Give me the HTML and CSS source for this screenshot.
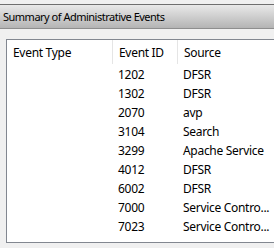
FILE: index.html
```html
<!DOCTYPE html>
<html lang="en">
<head>
  <meta charset="UTF-8" />
  <title>Summary of Administrative Events</title>
  <link rel="stylesheet" href="styles.css">
</head>
<body>

<!-- SECTION HEADER -->
<div class="section-bar">
  <span>Summary of Administrative Events</span>
</div>

<!-- EVENT LIST -->
<div class="event-list">
  <div class="list-head">
    <div class="col col-type">Event Type</div>
    <div class="col col-id">Event ID</div>
    <div class="col col-source">Source</div>
  </div>
  <div class="list-body">
    <div class="row"><div class="col col-type"></div><div class="col col-id">1202</div><div class="col col-source">DFSR</div></div>
    <div class="row"><div class="col col-type"></div><div class="col col-id">1302</div><div class="col col-source">DFSR</div></div>
    <div class="row"><div class="col col-type"></div><div class="col col-id">2070</div><div class="col col-source">avp</div></div>
    <div class="row"><div class="col col-type"></div><div class="col col-id">3104</div><div class="col col-source">Search</div></div>
    <div class="row"><div class="col col-type"></div><div class="col col-id">3299</div><div class="col col-source">Apache Service</div></div>
    <div class="row"><div class="col col-type"></div><div class="col col-id">4012</div><div class="col col-source">DFSR</div></div>
    <div class="row"><div class="col col-type"></div><div class="col col-id">6002</div><div class="col col-source">DFSR</div></div>
    <div class="row"><div class="col col-type"></div><div class="col col-id">7000</div><div class="col col-source">Service Contro...</div></div>
    <div class="row"><div class="col col-type"></div><div class="col col-id">7023</div><div class="col col-source">Service Contro...</div></div>
  </div>
</div>

</body>
</html>
```

FILE: styles.css
```css
body {
  margin: 0;
  font-family: 'Noto Sans', sans-serif;
  font-size: 12px;
  letter-spacing: -0.3px;
  background: #f0f0f0;
  color: #000;
  overflow: hidden;
  width: 274px;
  height: 248px;
}

/* Grey gradient bar with the section title */
.section-bar {
  margin-top: 4px;
  height: 23px;
  display: flex;
  align-items: center;
  padding-left: 3px;
  font-size: 11px;
  letter-spacing: -0.5px;
  border-top: 1px solid #6f6f6f;
  border-bottom: 1px solid #8e8e8e;
  background: linear-gradient(to bottom, #e9e9e9, #b4b4b4);
  color: #000;
}

.event-list {
  margin: 10px 0 0 6px;
  width: 268px;
  height: 202px;
  background: #fff;
  border: 1px solid #828790;
  border-right: 0;
  overflow: hidden;
}

.list-head {
  display: flex;
  height: 24px;
  align-items: center;
}

.list-head .col {
  height: 24px;
  display: flex;
  align-items: center;
}

.list-head .col-id,
.list-head .col-source {
  border-left: 1px solid #e5e5e5;
}

.row {
  display: flex;
  height: 19px;
  align-items: center;
}

.col {
  box-sizing: border-box;
  white-space: nowrap;
}

.col-type {
  width: 105px;
  padding-left: 6px;
}

.col-id {
  width: 65px;
  padding-left: 6px;
}

.col-source {
  flex: 1;
  padding-left: 6px;
  overflow: hidden;
}

.list-body {
  padding-top: 1px;
}
```
